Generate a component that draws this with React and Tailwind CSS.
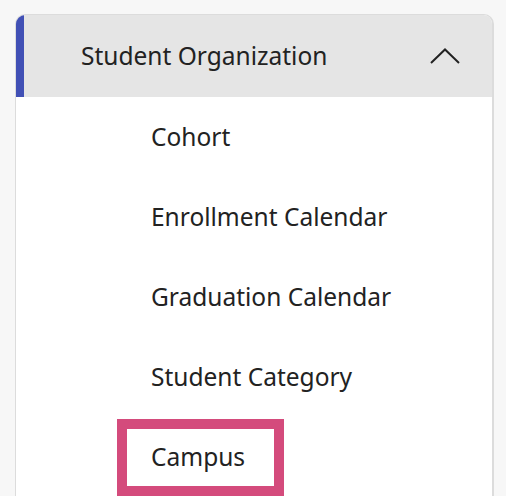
import { ChevronUp } from 'lucide-react';

const items = ['Cohort', 'Enrollment Calendar', 'Graduation Calendar', 'Student Category'];

export default function App() {
  return (
    <div
      className="min-h-screen bg-[#f7f7f7] pt-[14px] pl-[15px] text-[#222]"
      style={{ fontFamily: '"Noto Sans", "Open Sans", sans-serif' }}
    >
      <div className="w-[479px] h-[482px] overflow-hidden rounded-t-[10px] border border-r-2 border-b-0 border-[#dcdcdc] bg-white">
        {/* header */}
        <div className="flex h-[82px] items-center justify-between border-l-[8px] border-[#4150b5] bg-[#e5e5e5] pl-[57px] pr-[32px]">
          <span className="text-[24.5px] leading-none">Student Organization</span>
          <svg width="30" height="16" viewBox="0 0 30 16" fill="none" stroke="#222" strokeWidth="2">
            <path d="M1 15 L15 1.5 L29 15" />
          </svg>
        </div>

        {/* items */}
        {items.map((label) => (
          <div key={label} className="flex h-[80px] items-center pl-[135px] text-[24.5px]">
            {label}
          </div>
        ))}
        <div className="flex h-[80px] items-start pl-[101px] pt-[2px]">
          <div className="flex h-[77px] w-[167px] items-center border-[10px] border-[#d44b7c] pl-[24px] text-[24.5px]">
            Campus
          </div>
        </div>
      </div>
    </div>
  );
}
